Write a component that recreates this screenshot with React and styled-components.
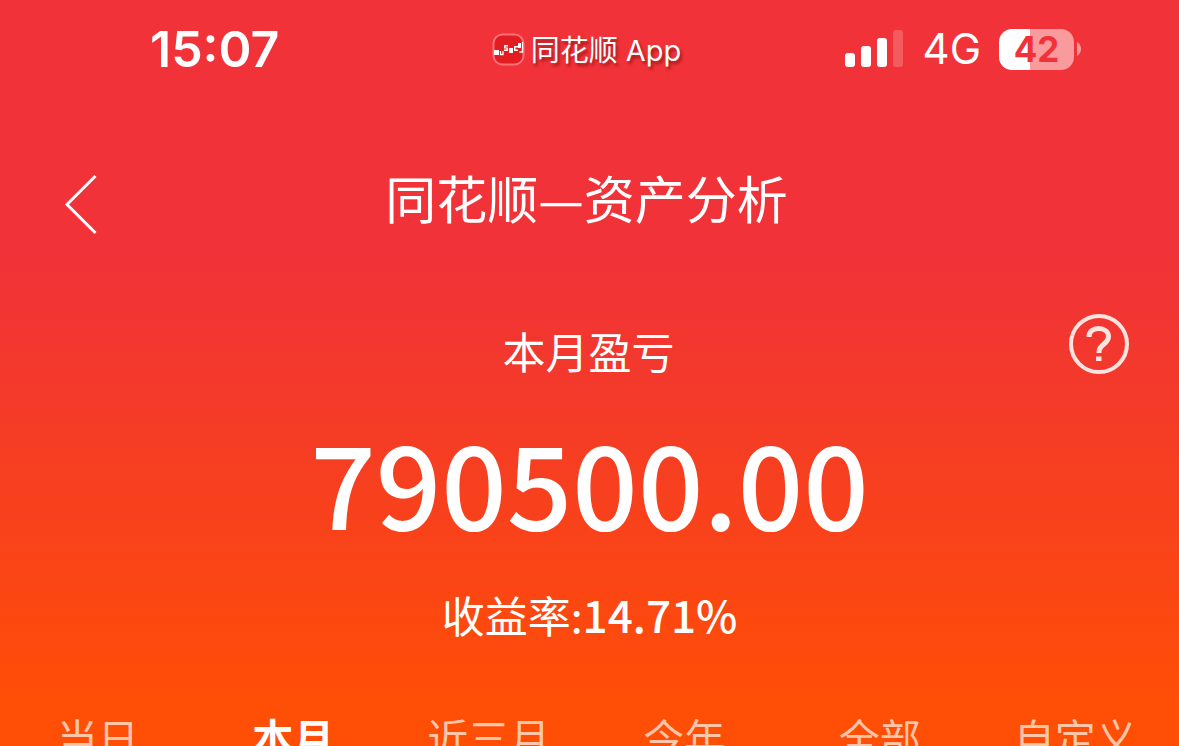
import {useState} from "react";
import styled, {createGlobalStyle} from "styled-components";


const GlobalStyle = createGlobalStyle`
  body {
    margin: 0;
  }

  * {
    box-sizing: border-box;
  }
`;

const Screen = styled.div`
  display: flex;
  flex-direction: column;
  height: 100vh;
  overflow: hidden;

  color: #ffffff;
  background: linear-gradient(
    180deg,
    #f13238 0,
    #f13238 260px,
    #f3392b 380px,
    #fa4417 560px,
    #ff4e06 700px
  );
  font-family: "Noto Sans CJK SC", sans-serif;
`;

const StatusBar = styled.header`
  display: grid;
  flex-shrink: 0;
  grid-template-columns: 1fr auto 1fr;
  align-items: center;
  height: 98px;
  padding: 0 98px 0 92px;

  font-family: Inter, sans-serif;
`;
const Clock = styled.time`
  padding-left: 58px;
  font-size: 50px;
  font-weight: 600;
  line-height: 60px;
`;
const AppBadge = styled.div`
  display: flex;
  align-items: center;
  gap: 6px;

  font-family: Inter, "Noto Sans CJK SC", sans-serif;
  font-size: 29px;
  line-height: 40px;
  text-shadow: 2px 3px 3px rgba(90, 0, 0, 0.5);
`;
const AppName = styled.span`
  padding-top: 4px;
`;
const StatusIcons = styled.div`
  display: flex;
  align-items: center;
  justify-content: flex-end;
`;
const Network = styled.span`
  margin: 0 18px 0 20px;
  font-size: 42px;
  font-weight: 400;
  line-height: 50px;
`;
const Battery = styled.span`
  width: 75px;
  height: 41px;
  border-radius: 13px;

  color: #f13238;
  background: linear-gradient(90deg, #ffffff 42%, #f99a9d 42%);
  font-size: 35px;
  font-weight: 700;
  line-height: 41px;
  text-align: center;
`;

const NavBar = styled.nav`
  display: grid;
  flex-shrink: 0;
  grid-template-columns: 1fr auto 1fr;
  align-items: center;
  height: 198px;
  padding: 0 64px 0 58px;
`;
const Title = styled.h1`
  margin: 0;
  font-size: 51px;
  font-weight: 400;
  line-height: 72px;
`;
const IconButton = styled.button`
  display: flex;
  justify-self: ${({$side}) => $side};
  padding: 0;
  border: 0;

  color: inherit;
  background: none;
  cursor: pointer;
`;

const Summary = styled.main`
  display: flex;
  flex: 1 0 auto;
  flex-direction: column;
  align-items: center;
`;
const SummaryHead = styled.div`
  display: grid;
  grid-template-columns: 1fr auto 1fr;
  width: 100%;
  height: 88px;
  padding: 18px 50px 0 48px;
`;
const SummaryLabel = styled.h2`
  grid-column: 2;
  margin: 0;
  padding-top: 6px;

  font-size: 43px;
  font-weight: 400;
  line-height: 60px;
`;
const Amount = styled.strong`
  margin-top: 26px;
  font-size: 115px;
  font-weight: 500;
  line-height: 140px;
`;
const Rate = styled.p`
  margin: 32px 0 0;
  font-size: 43px;
  line-height: 64px;
`;
const RateValue = styled.span`
  font-size: 44px;
  font-weight: 500;
`;

const Tabs = styled.div`
  display: grid;
  grid-template-columns: repeat(6, 1fr);
  width: 100%;
  margin-top: 60px;
  padding-right: 6px;
`;
const Tab = styled.button`
  padding: 0;
  border: 0;

  color: ${({$active}) => $active ? "#ffffff" : "#ffc5a8"};
  background: none;
  font-family: inherit;
  font-size: 41px;
  font-weight: ${({$active}) => $active ? 700 : 400};
  line-height: 60px;
  cursor: pointer;
`;


const tabNames = ["当日", "本月", "近三月", "今年", "全部", "自定义"];


function AppLogo() {
    return <svg width="33" height="33" viewBox="0 0 33 33" aria-hidden="true">
        <rect x="1.5" y="1.5" width="30" height="30" rx="9" fill="#e31c22" stroke="#fb7276" strokeWidth="2" />
        <path d="M2 17h5v5H2zM12 12h4v1.500h-2.500v1H16v3.500h-4v-1.500h2.500v-1H12zM17 15h4v5h-4zM22 13h4v1.500h-2.500v2H26V18h-4zM26 10h3v5h-3z"
              fill="#ffffff" />
        <path d="M8.500 18v3.500h2.500v-3.500M30.500 9v10h-3" fill="none" stroke="#ffffff" strokeWidth="1.300" />
    </svg>;
}

function SignalIcon() {
    return <svg width="58" height="38" viewBox="0 0 58 38" fill="#ffffff" aria-hidden="true">
        <rect x="0" y="23" width="10" height="14" rx="3" />
        <rect x="16" y="16" width="10" height="21" rx="3" />
        <rect x="32" y="8" width="10" height="29" rx="3" />
        <rect x="48" y="0" width="10" height="37" rx="3" opacity="0.2" />
    </svg>;
}

function BatteryTip() {
    return <svg width="7" height="14" viewBox="0 0 7 14" aria-hidden="true">
        <path d="M3 0c2.500 1.500 4 4 4 7s-1.500 5.500-4 7z" fill="#f99a9d" />
    </svg>;
}

function BackIcon() {
    return <svg width="40" height="76" viewBox="0 0 40 76" fill="none" stroke="#ffffff" aria-hidden="true">
        <path d="M37.500 17L9 45.500L37.500 74" strokeWidth="3" />
    </svg>;
}

function HelpIcon() {
    return <svg width="60" height="60" viewBox="0 0 60 60" fill="none" stroke="#ffe3df" aria-hidden="true">
        <circle cx="30" cy="30" r="28" strokeWidth="4" />
        <path d="M20 23c0-5.500 4-8.500 9.500-8.500s10 3 10 8c0 3.500-2 5.500-4.500 7.500c-3 2.300-5 4-5 8v1" strokeWidth="5" />
        <path d="M27 42.500h5.500v4.500H27z" fill="#ffe3df" stroke="none" />
    </svg>;
}

export default function App() {
    const [activeTab, setActiveTab] = useState("本月");

    return (<>
        <GlobalStyle />
        <Screen>
            <StatusBar>
                <Clock>15:07</Clock>
                <AppBadge>
                    <AppLogo />
                    <AppName>同花顺 App</AppName>
                </AppBadge>
                <StatusIcons>
                    <SignalIcon />
                    <Network>4G</Network>
                    <Battery>42</Battery>
                    <BatteryTip />
                </StatusIcons>
            </StatusBar>

            <NavBar>
                <IconButton $side="start" aria-label="返回">
                    <BackIcon />
                </IconButton>
                <Title>同花顺—资产分析</Title>
            </NavBar>

            <Summary>
                <SummaryHead>
                    <SummaryLabel>本月盈亏</SummaryLabel>
                    <IconButton $side="end" aria-label="帮助">
                        <HelpIcon />
                    </IconButton>
                </SummaryHead>
                <Amount>790500.00</Amount>
                <Rate>收益率:<RateValue>14.71%</RateValue></Rate>

                <Tabs>
                    {tabNames.map(
                        name => <Tab key={name}
                                     $active={name === activeTab}
                                     aria-pressed={name === activeTab}
                                     onClick={() => setActiveTab(name)}>
                            {name}
                        </Tab>)}
                </Tabs>
            </Summary>
        </Screen>
    </>);
}
